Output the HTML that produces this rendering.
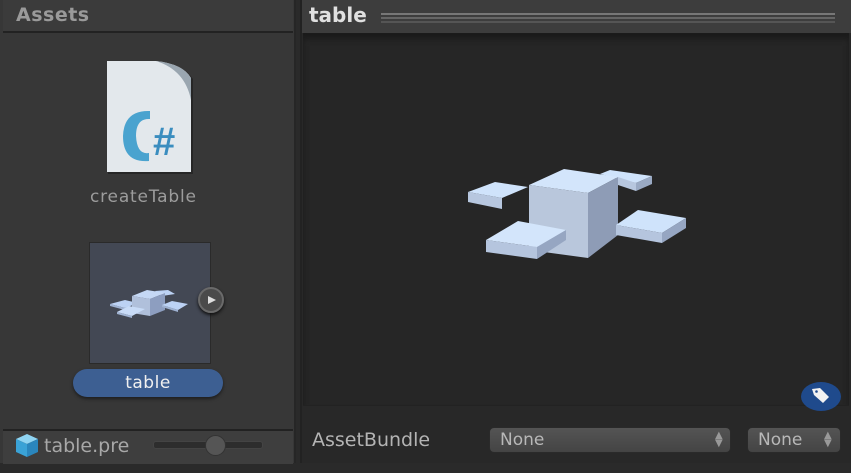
<!DOCTYPE html>
<html><head><style>
body{margin:0;width:851px;height:473px;background:#2a2a2a;position:relative;overflow:hidden;font-family:"DejaVu Sans","Liberation Sans",sans-serif}
.a{position:absolute}
</style></head><body>
<div class="a" style="left:0;top:0;width:294px;height:463px;background:#373737;border-right:2px solid #262626"></div>
<div class="a" style="left:3px;top:0;width:290px;height:31px;background:#3b3b3b;border-bottom:2px solid #222"></div>
<div class="a" style="left:16px;top:4px;font-size:19px;font-weight:bold;color:#9a9a9a;letter-spacing:0.5px">Assets</div>
<svg class="a" style="left:105px;top:60px" width="88" height="116">
<path d="M2,1 H51 Q78,4 87,18 V113 H2 Z" fill="#161616" opacity=".5" transform="translate(1,1)"/>
<path d="M2,1 H51 Q78,4 86,18 V112 H2 Z" fill="#e3e8ec"/>
<path d="M51,1 Q78,4 86,18 L86,40 Q80,10 51,1Z" fill="#9aa6b0"/>
<path d="M45,51 Q19,50 18,76 Q18,103 44,101 L44,93 Q32,95 31,76 Q31,58 45,59 Z" fill="#4aa3cf"/>
<text x="48" y="95" font-family="Liberation Sans" font-weight="bold" font-size="40" fill="#3a8dbf">#</text>
</svg>
<div class="a" style="left:90px;top:187px;font-size:17px;color:#9c9c9c;letter-spacing:0.8px">createTable</div>
<div class="a" style="left:89px;top:242px;width:120px;height:120px;background:#434854;border:1px solid #2a2a2a"></div>
<svg class="a" style="left:105px;top:285px" width="85" height="40">
<polygon points="5,19 20,15 33,18 20,23" fill="#bcd2f4"/><polygon points="5,19 20,23 20,25 5,21" fill="#9fb2d2"/>
<polygon points="50,6 63,5 70,9 57,11" fill="#bcd2f4"/>
<polygon points="27,11 42,5 60,8 45,14" fill="#c5d8f5"/>
<polygon points="27,11 45,14 45,31 27,28" fill="#b0c0db"/><polygon points="45,14 60,8 60,25 45,31" fill="#8d9ec0"/>
<polygon points="12,27 24,21 40,24 27,31" fill="#c8dbf7"/><polygon points="12,27 27,31 27,33 12,29" fill="#a0b3d2"/>
<polygon points="57,20 67,16 83,19 73,25" fill="#bcd2f4"/><polygon points="57,20 73,25 73,27 57,22" fill="#9fb2d2"/>
</svg>
<div class="a" style="left:198px;top:287px;width:26px;height:26px;border-radius:50%;background:#4a4a4a;border:2px solid #6a6a6a;box-sizing:border-box;box-shadow:0 2px 3px #111"></div>
<svg class="a" style="left:207px;top:295px" width="10" height="10"><polygon points="1,1 9,5 1,9" fill="#ddd"/></svg>
<div class="a" style="left:73px;top:369px;width:150px;height:28px;border-radius:14px;background:#3d5f92;box-shadow:0 2px 3px #1e1e1e;color:#f0f0f0;font-size:17px;text-align:center;line-height:28px;letter-spacing:0.5px">table</div>
<div class="a" style="left:3px;top:429px;width:290px;height:33px;background:#3e3e3e;border-top:2px solid #222"></div>
<svg class="a" style="left:14px;top:432px" width="26" height="26">
<polygon points="13,2 24,7 13,12 2,7" fill="#8fd4f2"/><polygon points="2,7 13,12 13,25 2,20" fill="#3aa2d6"/><polygon points="13,12 24,7 24,20 13,25" fill="#2a86bd"/>
</svg>
<div class="a" style="left:44px;top:435px;font-size:19px;color:#a8a8a8">table.pre</div>
<div class="a" style="left:153px;top:441px;width:108px;height:6px;border-radius:3px;background:#2d2d2d;border:1px solid #444"></div>
<div class="a" style="left:205px;top:435px;width:19px;height:19px;border-radius:50%;background:#555;border:1px solid #333"></div>
<div class="a" style="left:300px;top:0;width:551px;height:463px;background:#282828;border-left:2px solid #222"></div>
<div class="a" style="left:302px;top:0;width:549px;height:33px;background:#3d3d3d"></div>
<div class="a" style="left:309px;top:3px;font-size:20px;font-weight:bold;color:#e0e0e0">table</div>
<div class="a" style="left:381px;top:13px;width:454px;height:2px;background:#777"></div>
<div class="a" style="left:381px;top:17px;width:454px;height:2px;background:#666"></div>
<div class="a" style="left:381px;top:21px;width:454px;height:2px;background:#555"></div>
<div class="a" style="left:303px;top:33px;width:546px;height:372px;background:#262626;box-shadow:inset 0 6px 6px #1b1b1b;border-bottom:1px solid #222"></div>
<svg class="a" style="left:440px;top:150px" width="260" height="110">
<polygon points="28,42 55,32 88,37 62,48" fill="#cfe3fb"/><polygon points="28,42 62,48 62,59 28,52" fill="#b7c7df"/>
<polygon points="160,24 170,20 212,26 196,33" fill="#cfe3fb"/><polygon points="178,27 196,33 196,41 178,35" fill="#b7c7df"/><polygon points="196,33 212,26 212,34 196,41" fill="#9aaac4"/>
<polygon points="89,35 124,19 178,27 148,43" fill="#d3e5fb"/>
<polygon points="89,35 148,43 148,108 89,100" fill="#b9c7dc"/>
<polygon points="148,43 178,27 178,85 148,108" fill="#8e9cb6"/>
<polygon points="46,90 78,71 126,80 97,97" fill="#d3e5fb"/><polygon points="46,90 97,97 97,109 46,102" fill="#b5c5de"/><polygon points="97,97 126,80 126,90 97,109" fill="#96a6c2"/>
<polygon points="176,75 198,60 246,68 222,83" fill="#cfe3fb"/><polygon points="176,75 222,83 222,93 176,85" fill="#b5c5de"/><polygon points="222,83 246,68 246,78 222,93" fill="#96a6c2"/>
</svg>
<div class="a" style="left:801px;top:382px;width:40px;height:29px;border-radius:50%;background:#1f4a8c"></div>
<svg class="a" style="left:808px;top:385px" width="26" height="22"><path d="M4,4 L12,3 L21,12 L15,18 L6,10 Z" fill="#f2f2f2"/><circle cx="8.5" cy="6.5" r="1.3" fill="#1f4a8c"/></svg>
<div class="a" style="left:312px;top:429px;font-size:19px;color:#b4b4b4">AssetBundle</div>
<div class="a" style="left:489px;top:427px;width:242px;height:26px;border-radius:5px;background:linear-gradient(#545454,#444);border:1px solid #2a2a2a;box-sizing:border-box;color:#b8b8b8;font-size:17px;line-height:24px;padding-left:10px">None</div>
<div class="a" style="left:715px;top:432px;color:#999;font-size:10px;line-height:8px">▲<br>▼</div>
<div class="a" style="left:747px;top:427px;width:94px;height:26px;border-radius:5px;background:linear-gradient(#545454,#444);border:1px solid #2a2a2a;box-sizing:border-box;color:#b8b8b8;font-size:17px;line-height:24px;padding-left:10px">None</div>
<div class="a" style="left:824px;top:432px;color:#999;font-size:10px;line-height:8px">▲<br>▼</div>
</body></html>
